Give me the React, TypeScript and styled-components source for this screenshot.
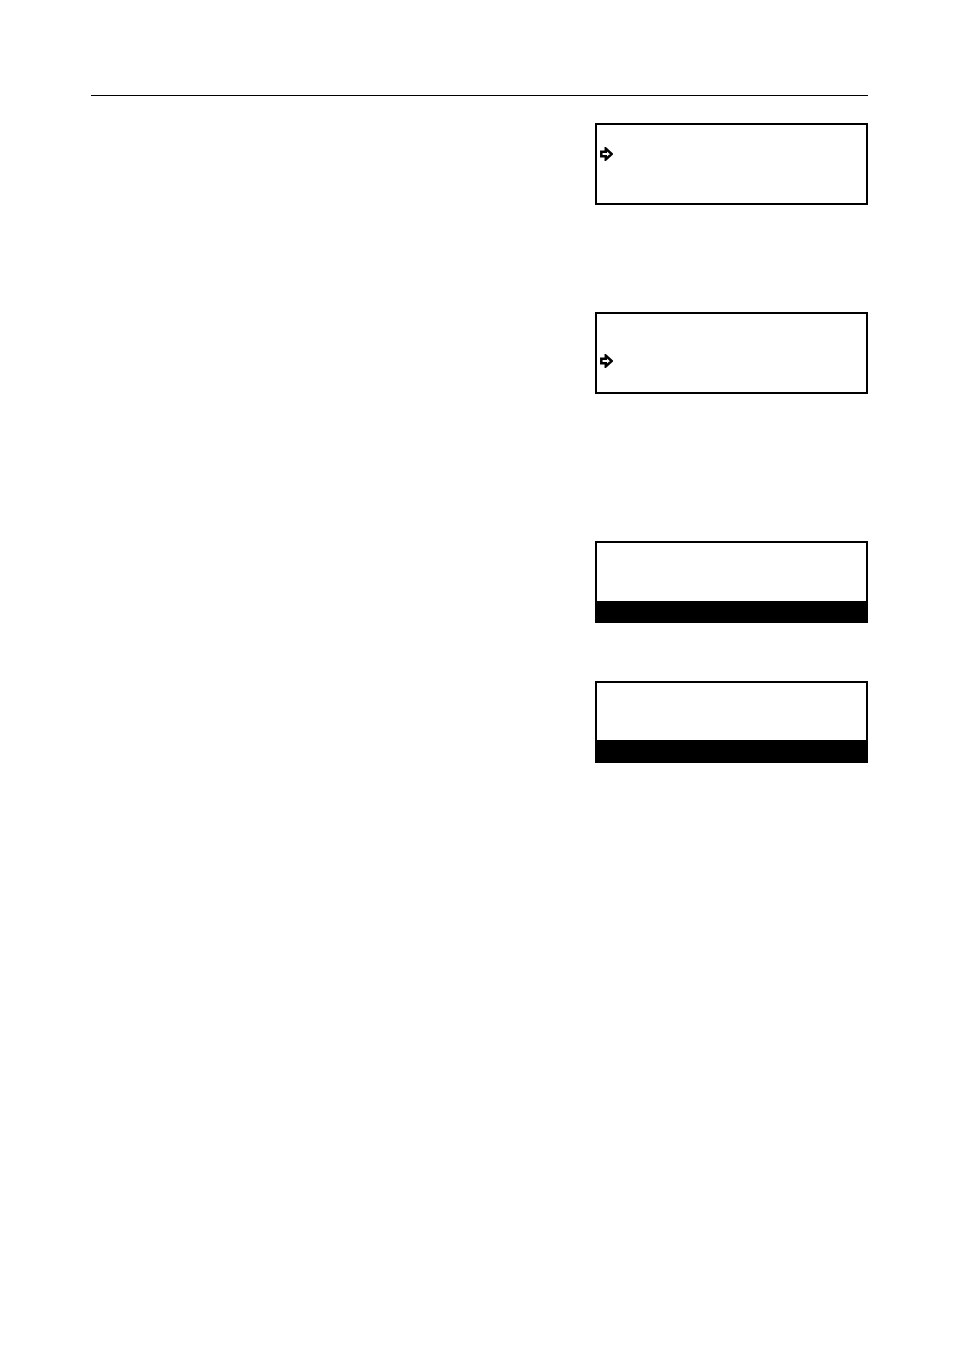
import React from "react";
import styled, { createGlobalStyle } from "styled-components";

const Global = createGlobalStyle`
  html, body {
    margin: 0;
    padding: 0;
    background: #ffffff;
    font-family: "Liberation Sans", Arial, sans-serif;
  }
`;

const Page = styled.div`
  width: 954px;
  min-height: 1350px;
  background: #ffffff;
  padding-top: 95px;
  box-sizing: border-box;
`;

const HeaderRule = styled.div`
  margin-left: 91px;
  width: 777px;
  height: 1px;
  background: #000000;
`;

const PanelColumn = styled.div`
  margin-left: 595px;
  display: flex;
  flex-direction: column;
  width: 273px;
`;

const Display = styled.div<{ $top: number; $height?: number }>`
  margin-top: ${(p) => p.$top}px;
  height: ${(p) => p.$height ?? 82}px;
  box-sizing: border-box;
  border: 2px solid #000000;
  background: #ffffff;
  display: flex;
  flex-direction: column;
`;

const Lines = styled.div`
  padding: 2px 0 0 3px;
  display: flex;
  flex-direction: column;
`;

const Line = styled.div`
  height: 18px;
  display: flex;
  align-items: center;
`;

const Screen = styled.div`
  flex: 1;
`;

const StatusBar = styled.div<{ $h: number }>`
  height: ${(p) => p.$h}px;
  background: #000000;
`;

/* hollow pointer used as the LCD menu cursor */
const Cursor = () => (
  <svg width="13" height="14" viewBox="0 0 13 14" aria-hidden="true">
    <polygon
      points="1.3,4.8 5.8,4.8 5.8,1.6 11.6,7 5.8,12.4 5.8,9.2 1.3,9.2"
      fill="#ffffff"
      stroke="#000000"
      strokeWidth="2.5"
      strokeLinejoin="miter"
    />
  </svg>
);

const MenuDisplay: React.FC<{ top: number; cursorRow: number }> = ({ top, cursorRow }) => (
  <Display $top={top}>
    <Lines>
      {[0, 1, 2, 3].map((i) => (
        <Line key={i}>{i === cursorRow ? <Cursor /> : null}</Line>
      ))}
    </Lines>
  </Display>
);

const MessageDisplay: React.FC<{ top: number; bar: number }> = ({ top, bar }) => (
  <Display $top={top}>
    <Screen />
    <StatusBar $h={bar} />
  </Display>
);

export default function App() {
  return (
    <Page>
      <Global />
      <HeaderRule />
      <PanelColumn>
        <MenuDisplay top={27} cursorRow={1} />
        <MenuDisplay top={107} cursorRow={2} />
        <MessageDisplay top={147} bar={20} />
        <MessageDisplay top={58} bar={21} />
      </PanelColumn>
    </Page>
  );
}
